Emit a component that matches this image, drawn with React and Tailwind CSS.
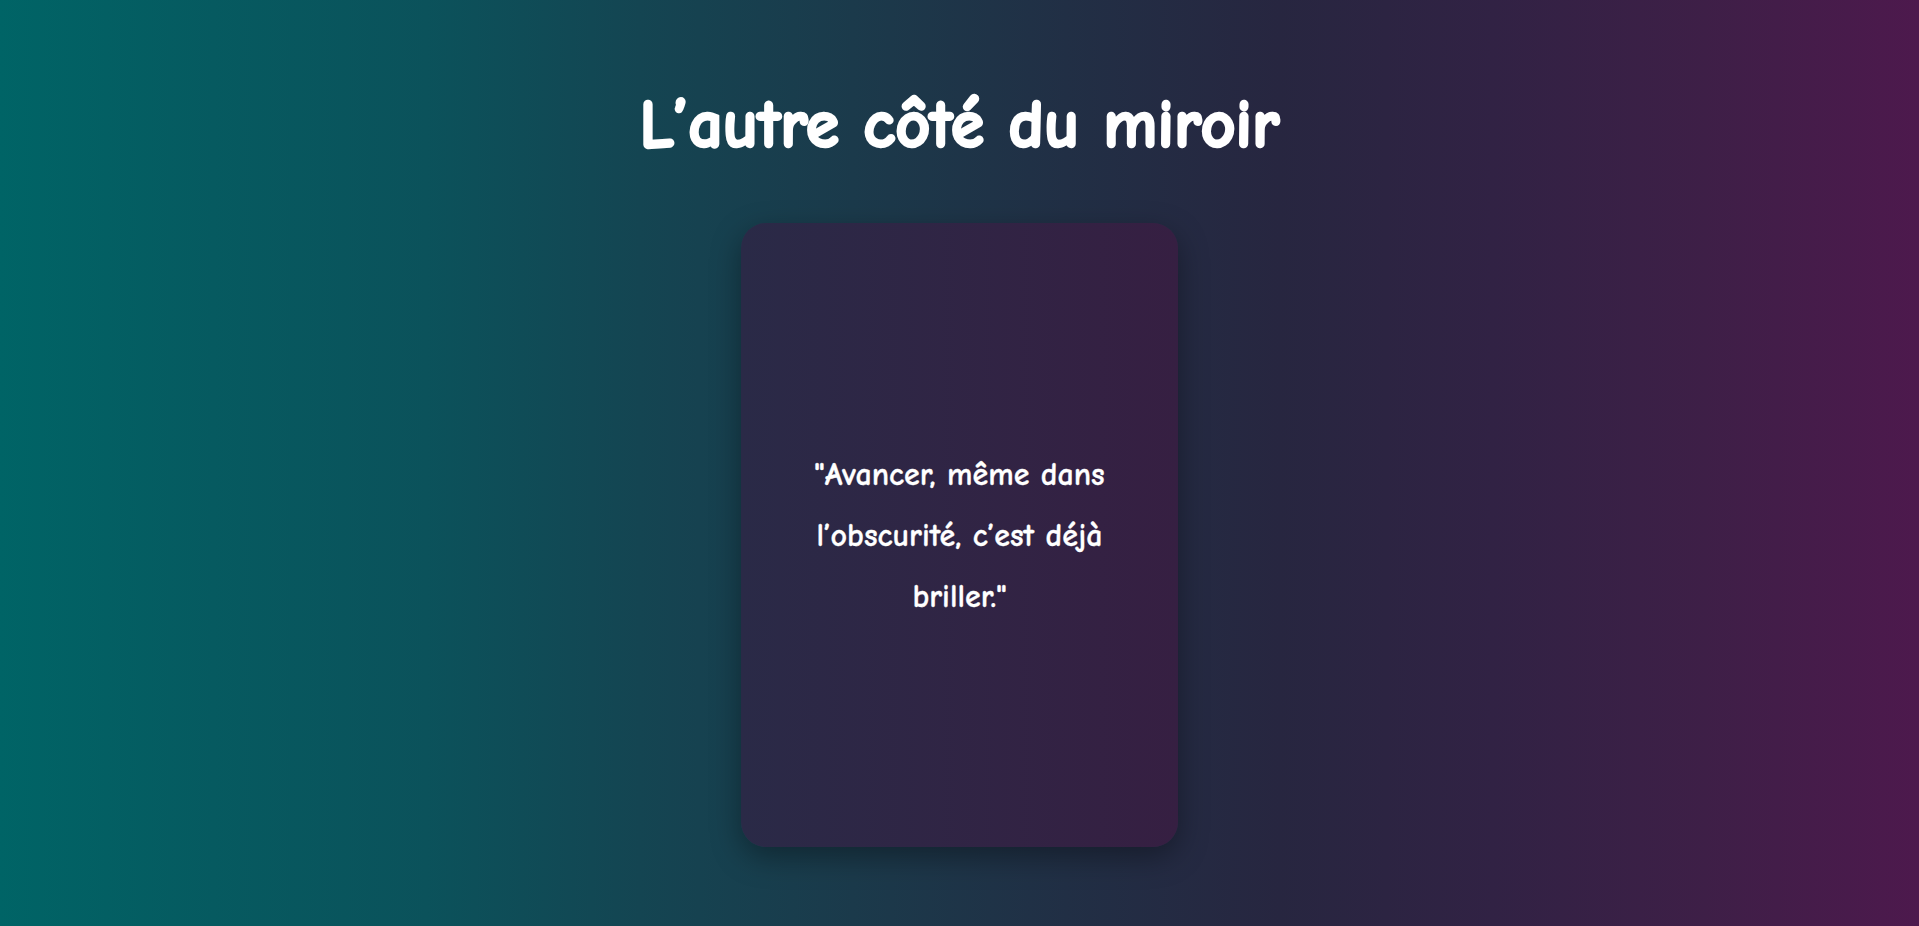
export default function App() {
  return (
    <div className="flex min-h-[926px] flex-col items-center bg-[linear-gradient(to_right,#006466,#065a60,#0b525b,#144552,#1b3a4b,#212f45,#272640,#312244,#3e1f47,#4d194d)] pt-[84px] font-['Comic_Neue','Comic_Sans_MS',cursive] text-white">
      <h1 className="text-[68px] font-bold leading-[82px] [-webkit-text-stroke:2.5px_white]">L’autre côté du miroir</h1>
      <div className="mt-[57px] flex h-[624px] w-[437px] items-center justify-center rounded-[25px] bg-[linear-gradient(to_right,#2a2a47,#361f42)] px-[48px] text-center shadow-[0_10px_30px_rgba(0,0,0,0.35)]">
        <p className="text-[32px] font-bold leading-[61px] [-webkit-text-stroke:0.3px_white]">"Avancer, même dans l’obscurité, c’est déjà briller."</p>
      </div>
    </div>
  );
}
